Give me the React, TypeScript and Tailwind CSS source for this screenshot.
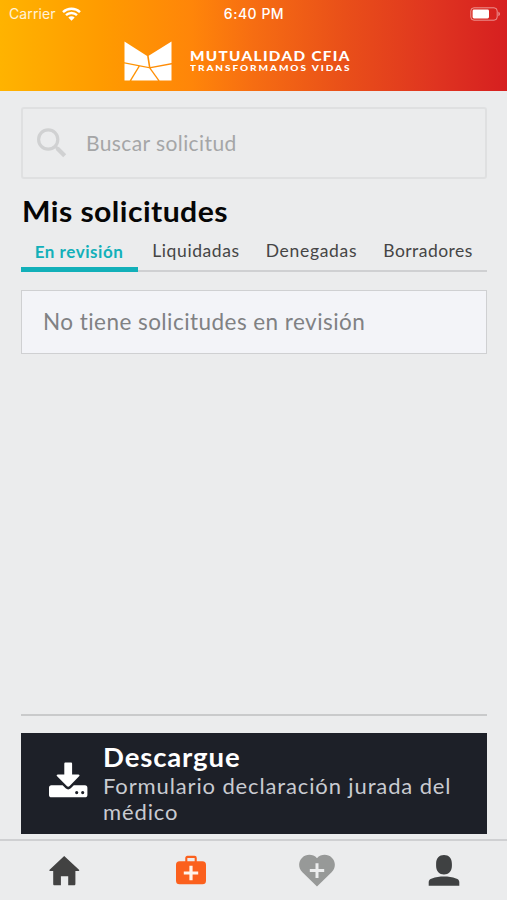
import { useState } from 'react';

const TABS = [
  { label: 'En revisión', box: 'w-[117px]', text: 'tracking-[0.55px]' },
  { label: 'Liquidadas', box: 'w-[116px]', text: 'tracking-[0.6px]' },
  { label: 'Denegadas', box: 'w-[115px]', text: 'tracking-[0.7px]' },
  { label: 'Borradores', box: 'w-[118px]', text: 'tracking-[0.45px]' },
];

function StatusBar() {
  return (
    <div className="grid h-[28px] grid-cols-3 items-center px-[9px] font-['Inter',sans-serif] text-[14px] text-white">
      <div className="flex items-center gap-[6px] text-white/85">
        <span className="leading-none tracking-[0.1px]">Carrier</span>
        <svg width="19" height="14" viewBox="0 0 19 14" fill="none" stroke="#fff" strokeWidth="2.4">
          <path d="M1 5.1C5.7.6 13.3.6 18 5.1" />
          <path d="M4 8.2c3-2.9 8-2.9 11 0" />
          <path d="M9.5 13.7 6.3 10.6c1.8-1.7 4.6-1.7 6.4 0z" fill="#fff" stroke="none" />
        </svg>
      </div>
      <span className="pl-px text-center text-[14px] leading-none font-medium tracking-[0.5px]">6:40 PM</span>
      <svg className="-mr-[4px] justify-self-end" width="32" height="14" viewBox="0 0 32 14">
        <rect x=".8" y=".8" width="26.4" height="12.4" rx="3.2" fill="none" stroke="#fff" strokeOpacity=".5" />
        <rect x="2.6" y="2.6" width="16.4" height="8.8" rx="1.4" fill="#fff" />
        <path d="M28.4 4.8c2 .7 2 3.7 0 4.4z" fill="#fff" fillOpacity=".5" />
      </svg>
    </div>
  );
}

function Brand() {
  return (
    <div className="flex items-start pt-[13px] pl-[124px] text-white">
      <svg width="48" height="40" viewBox="0 0 48 40" fill="#fff">
        <path d="M.5.5 23.1 15l1.7 11L.5 21.2z" />
        <path d="M47.5.5v21.6L26.4 26l-1.7-11.2z" />
        <path d="M.5 22.5 14.4 25.2 5.7 39.5H.5z" />
        <path d="M15.8 25.5 25.2 27.3 34 39.5H7.3z" />
        <path d="M47.5 23.4v16.1H35.6L26.8 27.2z" />
      </svg>
      <div className="pt-[8px] pl-[18px] font-black">
        <div className="w-[135px] origin-left scale-x-[1.22] text-[12.5px] leading-[15px] tracking-[1.1px] whitespace-nowrap">MUTUALIDAD CFIA</div>
        <div className="w-[135px] origin-left scale-x-[1.25] text-[8px] leading-[9px] tracking-[1.55px] whitespace-nowrap">TRANSFORMAMOS VIDAS</div>
      </div>
    </div>
  );
}

function Tabs() {
  const [active, setActive] = useState(0);

  return (
    <div className="flex h-[37px] border-b-2 border-[#cfd0d2]">
      {TABS.map((tab, i) => (
        <button
          key={tab.label}
          onClick={() => setActive(i)}
          className={`${tab.box} -mb-[2px] flex justify-center whitespace-nowrap ${
            i === active
              ? 'border-b-[5px] border-[#12b0b9] pt-[5px] pr-px text-[17px] font-bold text-[#12b0b9]'
              : 'pt-[4px] text-[17.5px] text-[#454545]'
          }`}
        >
          <span className={`${tab.text} leading-[24px]`}>{tab.label}</span>
        </button>
      ))}
    </div>
  );
}

function BottomNav() {
  return (
    <nav className="grid h-[61px] shrink-0 grid-cols-4 border-t-2 border-[#cfd0d2] pl-px">
      <button className="flex justify-center pt-[14px]">
        <svg width="31" height="32" viewBox="0 0 31 32" fill="#424242">
          <path d="M15.2 1 .6 14.8c-.6.6-.3 1.1.4 1.1h3.2v12.8c0 1.1.4 1.6 1.4 1.6h6.3v-9.1h7.3v9.1h5.7c1 0 1.5-.5 1.5-1.6V15.9h3.2c.7 0 1-.5.4-1.1z" />
        </svg>
      </button>
      <button className="flex justify-center pt-[14px]">
        <svg width="32" height="32" viewBox="0 0 32 32">
          <path d="M11.3 7V3c0-.7.4-1.1 1.1-1.1h7.2c.7 0 1.1.4 1.1 1.1v4" fill="none" stroke="#fb601d" strokeWidth="2.1" />
          <rect x="1" y="6.3" width="30" height="23" rx="3.6" fill="#fb601d" />
          <path d="M16 10.8v14.4M8.8 18h14.4" stroke="#fff3ea" strokeWidth="3.2" />
        </svg>
      </button>
      <button className="flex justify-center pt-[13px]">
        <svg width="36" height="33" viewBox="0 0 36 33">
          <path d="M18 32.4 3.4 18.3C-.9 14-.9 7.6 3.2 3.7 7.3-.2 14-.1 18 4.2 22-.1 28.7-.2 32.8 3.7c4.1 3.9 4.1 10.3-.2 14.6z" fill="#979998" />
          <path d="M18 9.3v14.6M10.8 16.6h14.4" stroke="#ecedee" strokeWidth="3" />
        </svg>
      </button>
      <button className="flex justify-center pt-[13px]">
        <svg width="32" height="33" viewBox="0 0 32 33" fill="#3f4142">
          <path d="M16 1.1c4.8 0 7.9 3.3 7.9 8.6v2.2c0 5-3.4 8.5-7.9 8.5s-7.9-3.5-7.9-8.5V9.7c0-5.3 3.1-8.6 7.9-8.6z" />
          <path d="M.7 31.8v-3.7c0-2 1.2-3 3.3-3.7 7.2-2.5 16.8-2.5 24 0 2.1.7 3.3 1.7 3.3 3.7v3.7z" />
        </svg>
      </button>
    </nav>
  );
}

export default function App() {
  return (
    <div className="flex h-[900px] w-[507px] flex-col overflow-hidden bg-[#ebeced] font-['Lato',sans-serif]">
      <header className="h-[91px] shrink-0 bg-[linear-gradient(90deg,#ffb300_0%,#ff9b00_20%,#ff8509_38%,#f66d12_50%,#e94f19_68%,#df3420_86%,#d61f20_100%)]">
        <StatusBar />
        <Brand />
      </header>

      <main className="flex min-h-0 flex-1 flex-col pr-[20px] pl-[21px]">
        <div className="mt-[16px] flex h-[72px] shrink-0 items-center rounded-[3px] border-2 border-[#dfe0e1] pl-[13px]">
          <svg width="32" height="32" viewBox="0 0 32 32" fill="none" stroke="#d0d1d2">
            <circle cx="12.2" cy="12.5" r="9.6" strokeWidth="3.2" />
            <path d="m19 19 3 3" strokeWidth="3" />
            <path d="m21.2 21.2 7.5 7.5" strokeWidth="4.2" />
          </svg>
          <span className="pb-[2px] pl-[18px] text-[21px] leading-none tracking-[0.4px] text-[#a5a6a7]">Buscar solicitud</span>
        </div>

        <h1 className="mt-[15px] w-[300px] origin-left scale-x-[1.06] pl-px text-[28.5px] leading-[34px] font-bold tracking-[0.4px] text-[#060606]">Mis solicitudes</h1>
        <div className="mt-[7px] shrink-0">
          <Tabs />
        </div>

        <div className="mt-[18px] flex h-[64px] shrink-0 items-center border border-[#cfd0d2] bg-[#f3f4f8] pl-[21px]">
          <span className="text-[22.5px] leading-none tracking-[0.45px] text-[#808183]">No tiene solicitudes en revisión</span>
        </div>

        <div className="mt-auto shrink-0 border-t-2 border-[#c9cacb] pt-[17px] pb-[5px]">
          <button className="flex h-[101px] w-full bg-[#1d2028] pl-[28px] text-left text-white">
            <svg className="mt-[29px] shrink-0" width="39" height="37" viewBox="0 0 39 37" fill="#fff">
              <path d="M15.3 1.8c0-.9.4-1.3 1.3-1.3h5.2c.9 0 1.3.4 1.3 1.3v10.7h6.2c1.2 0 1.6.9.8 1.8L20.6 24c-.9.9-1.9.9-2.8 0l-9.7-9.7c-.8-.9-.4-1.8.8-1.8h6.4z" />
              <path fillRule="evenodd" d="M2.4 23.3h11.2l3 3c1.6 1.5 3.6 1.5 5.2 0l3-3H36c1.5 0 2.4.9 2.4 2.4v7.2c0 1.5-.9 2.4-2.4 2.4H2.4C.9 35.3 0 34.4 0 32.9v-7.2c0-1.5.9-2.4 2.4-2.4zM27.7 29a1.6 1.6 0 1 0 0 3.2 1.6 1.6 0 0 0 0-3.2zm6 0a1.6 1.6 0 1 0 0 3.2 1.6 1.6 0 0 0 0-3.2z" />
            </svg>
            <div className="pt-[8px] pl-[15px]">
              <div className="w-[200px] origin-left scale-x-[1.06] text-[26px] leading-[32px] font-bold tracking-[0.8px]">Descargue</div>
              <div className="text-[22px] leading-[26px] tracking-[0.87px] whitespace-nowrap text-[#c9cbd1]">
                Formulario declaración jurada del
                <br />
                médico
              </div>
            </div>
          </button>
        </div>
      </main>

      <BottomNav />
    </div>
  );
}
